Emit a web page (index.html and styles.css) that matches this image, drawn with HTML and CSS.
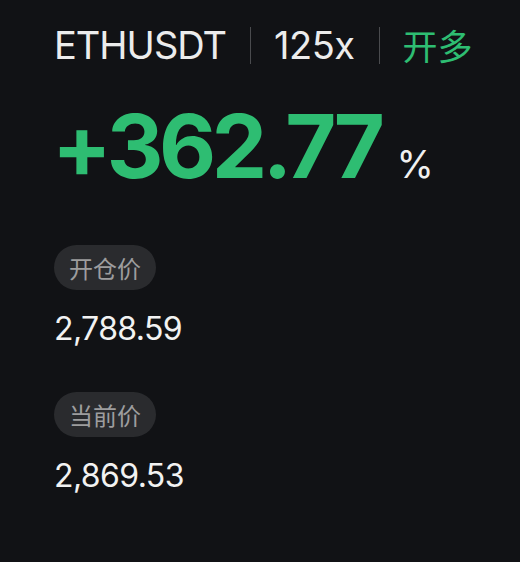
FILE: index.html
```html
<!DOCTYPE html>
<html lang="zh">
<head>
    <meta charset="UTF-8">
    <meta name="viewport" content="width=device-width, initial-scale=1.0">
    <title>ETHUSDT 125x</title>
    <link rel="stylesheet" href="styles.css">
</head>
<body>
    <div class="tarjeta">
        <div class="cabecera">
            <span class="par">ETHUSDT</span>
            <span class="separador"></span>
            <span class="apalancamiento">125x</span>
            <span class="separador"></span>
            <span class="lado">开多</span>
        </div>

        <div class="rendimiento">
            <span class="cifra">+362.77</span>
            <span class="porcentaje">%</span>
        </div>

        <div class="etiqueta etiqueta-primera">开仓价</div>
        <div class="precio">2,788.59</div>

        <div class="etiqueta etiqueta-segunda">当前价</div>
        <div class="precio">2,869.53</div>
    </div>
</body>
</html>
```

FILE: styles.css
```css
body {
    margin: 0;
    background-color: #111215;
    color: #f0f0f0;
    font-family: Inter, "Noto Sans CJK SC", sans-serif;
    height: 562px;
    overflow: hidden;
}
.tarjeta {
    padding: 25px 0 0 54px;
}
.cabecera {
    display: flex;
    align-items: center;
    height: 40px;
    font-size: 38px;
    line-height: 40px;
}
.par {
    color: #ececec;
    letter-spacing: -1px;
}
.apalancamiento {
    color: #ececec;
    letter-spacing: -0.5px;
}
.lado {
    color: #2ebd72;
    font-family: "Noto Sans CJK SC", sans-serif;
    font-size: 35px;
}
.separador {
    width: 1px;
    height: 37px;
    background-color: #4a4b4e;
    margin: 0 23px 0 24px;
}
.rendimiento {
    display: flex;
    align-items: baseline;
    margin-top: 37px;
    line-height: 1;
}
.cifra {
    font-size: 88px;
    font-weight: 700;
    color: #2ebd72;
    letter-spacing: -4.5px;
    margin-left: -2px;
}
.porcentaje {
    font-size: 38px;
    margin-left: 16px;
    color: #f0f0f0;
}
.etiqueta {
    display: inline-block;
    height: 45px;
    line-height: 45px;
    padding: 0 15px;
    border-radius: 23px;
    background-color: #2a2b2e;
    color: #9d9d9e;
    font-family: "Noto Sans CJK SC", sans-serif;
    font-size: 24px;
}
.etiqueta-primera {
    margin-top: 55px;
}
.etiqueta-segunda {
    margin-top: 43px;
}
.precio {
    margin-top: 19px;
    font-size: 32px;
    line-height: 40px;
    letter-spacing: -0.6px;
    color: #f2f2f2;
}
```
